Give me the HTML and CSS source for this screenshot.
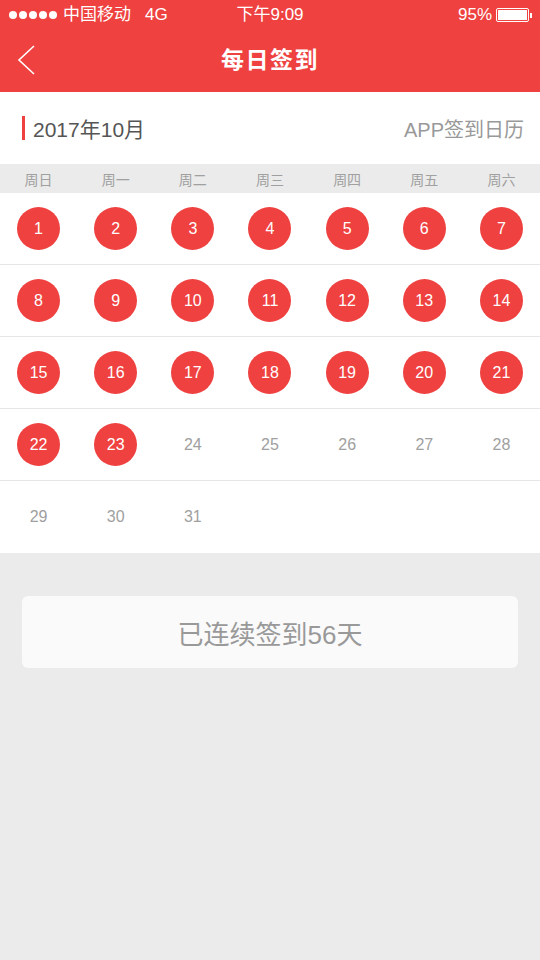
FILE: index.html
```html
<!DOCTYPE html>
<html>
<head>
<meta charset="UTF-8">
<title>每日签到</title>
<link rel="stylesheet" href="styles.css">
</head>
<body>
<div class="top">
  <div class="status">
    <div class="status-left"><span class="dot"></span><span class="dot"></span><span class="dot"></span><span class="dot"></span><span class="dot"></span><span class="carrier">中国移动</span><span class="net">4G</span></div>
    <div class="status-mid">下午9:09</div>
    <div class="status-right">95%<span class="battery"><span class="level"></span></span><span class="nub"></span></div>
  </div>
  <div class="navbar">
    <svg class="back" width="20" height="32" viewBox="0 0 20 32"><polyline points="17,2 2,16 17,30" fill="none" stroke="#fff" stroke-width="1.6"/></svg>
    <h1>每日签到</h1>
  </div>
</div>

<div class="month-head">
  <div class="month"><span class="mark"></span>2017年10月</div>
  <div class="cal-name">APP签到日历</div>
</div>

<div class="week">
  <span>周日</span><span>周一</span><span>周二</span><span>周三</span><span>周四</span><span>周五</span><span>周六</span>
</div>

<div class="grid">
  <div class="row">
    <div class="day"><b>1</b></div><div class="day"><b>2</b></div><div class="day"><b>3</b></div><div class="day"><b>4</b></div><div class="day"><b>5</b></div><div class="day"><b>6</b></div><div class="day"><b>7</b></div>
  </div>
  <div class="row">
    <div class="day"><b>8</b></div><div class="day"><b>9</b></div><div class="day"><b>10</b></div><div class="day"><b>11</b></div><div class="day"><b>12</b></div><div class="day"><b>13</b></div><div class="day"><b>14</b></div>
  </div>
  <div class="row">
    <div class="day"><b>15</b></div><div class="day"><b>16</b></div><div class="day"><b>17</b></div><div class="day"><b>18</b></div><div class="day"><b>19</b></div><div class="day"><b>20</b></div><div class="day"><b>21</b></div>
  </div>
  <div class="row">
    <div class="day"><b>22</b></div><div class="day"><b>23</b></div><div class="day"><i>24</i></div><div class="day"><i>25</i></div><div class="day"><i>26</i></div><div class="day"><i>27</i></div><div class="day"><i>28</i></div>
  </div>
  <div class="row last">
    <div class="day"><i>29</i></div><div class="day"><i>30</i></div><div class="day"><i>31</i></div><div class="day"></div><div class="day"></div><div class="day"></div><div class="day"></div>
  </div>
</div>

<div class="summary">
  <div class="card">已连续签到56天</div>
</div>
</body>
</html>
```

FILE: styles.css
```css
body{margin:0;background:#ebebeb;font-family:"Liberation Sans","Noto Sans CJK SC",sans-serif;width:540px;height:960px;overflow:hidden}
.top{background:#ee4140;color:#fff;height:92px}
.status{height:30px;display:flex;align-items:center;justify-content:space-between;padding:0 8px 0 9px;font-size:17px;line-height:30px;position:relative}
.status-left{display:flex;align-items:center}
.dot{width:8px;height:8px;border-radius:50%;background:#fff;margin-right:2px}
.carrier{margin-left:4px}
.net{margin-left:14px}
.status-mid{position:absolute;left:0;right:0;top:0;text-align:center}
.status-right{display:flex;align-items:center}
.battery{display:inline-block;width:29px;height:10px;border:1px solid #fff;border-radius:2px;margin-left:4px;padding:1px}
.level{display:block;width:29px;height:10px;background:#fff}
.nub{display:inline-block;width:2px;height:5px;background:#fff;margin-left:1px}
.navbar{height:62px;display:flex;align-items:center;justify-content:center;position:relative}
.back{position:absolute;left:17px;top:14px}
h1{margin:0 0 6px;font-size:23px;font-weight:bold;letter-spacing:1.5px}
.month-head{background:#fff;height:72px;display:flex;align-items:center;justify-content:space-between;padding:0 16px 0 22px}
.month{font-size:21px;color:#555;display:flex;align-items:center}
.mark{width:3px;height:24px;background:#ee4140;margin-right:8px}
.cal-name{font-size:20px;color:#999}
.week{height:29px;display:grid;grid-template-columns:repeat(7,1fr);align-items:center;text-align:center;font-size:14px;color:#a0a0a0;background:#ebebeb}
.grid{background:#fff}
.row{height:71px;display:grid;grid-template-columns:repeat(7,1fr);align-items:center;border-bottom:1px solid #e5e5e5}
.row.last{border-bottom:none;height:72px}
.day{display:flex;justify-content:center;align-items:center;font-size:16px}
.day b{width:43px;height:43px;border-radius:50%;background:#ee4140;color:#fff;font-weight:normal;display:flex;align-items:center;justify-content:center}
.day i{font-style:normal;color:#a0a0a0;font-size:16px}
.summary{padding:43px 22px 0}
.card{background:#fafafa;height:72px;border-radius:6px;display:flex;align-items:center;justify-content:center;font-size:26px;color:#999}
```
